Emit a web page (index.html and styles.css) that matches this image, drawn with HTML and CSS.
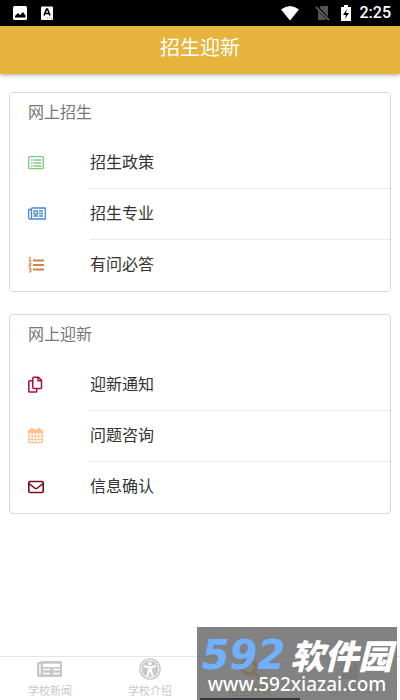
FILE: index.html
```
<!DOCTYPE html>
<html lang="zh-CN">
<head>
<meta charset="utf-8">
<meta name="viewport" content="width=device-width, initial-scale=1">
<title>招生迎新</title>
<link rel="stylesheet" href="styles.css">
</head>
<body>
<div class="status">
  <svg class="status-icon" viewBox="0 0 16 16"><rect x="1" y="1" width="14" height="14" rx="1.500" fill="#fff"/><path d="M3 12.500V11l3-3 2 2 3-3 2.500 3.500v2z" fill="#000"/></svg>
  <svg class="status-icon status-a" viewBox="0 0 16 16"><rect x="2" y="1.500" width="12" height="13.500" rx="1" fill="#fff"/><path d="M5 10.500 7.500 4h1L11 10.500M6 8.500h4" fill="none" stroke="#000" stroke-width="1.600"/><path d="M8 13h5" stroke="#888" stroke-dasharray="1 1"/></svg>
  <svg class="wifi" viewBox="0 0 20 16"><path d="M1 4.500Q10-2.500 19 4.500L10 15.500z" fill="#fff"/></svg>
  <svg class="status-icon" viewBox="0 0 16 16"><path d="M6 1h7v14H3V4z" fill="#555"/><path d="M1 1l13 14" stroke="#000" stroke-width="3"/><path d="M1 2l13 13" stroke="#777" stroke-width="1.200"/></svg>
  <svg class="battery" viewBox="0 0 12 18"><path d="M4 1h4v2h3v14H1V3h3z" fill="#fff"/><path d="M7 5l-4 6h3l-1 4 4-6H6z" fill="#000"/></svg>
  <span class="time">2:25</span>
</div>
<header class="header"><h1>招生迎新</h1></header>
<main class="main">
  <section class="card">
    <h2>网上招生</h2>
    <a class="row" href="#policy">
      <svg class="icon green" viewBox="0 0 18 18"><rect x=".7" y="2.700" width="14.600" height="12" rx="1"/><path d="M3 6h1.500M3 9h1.500M3 12h1.500M5.500 6h8M5.500 9h8M5.500 12h8"/></svg>
      <span>招生政策</span></a>
    <a class="row" href="#major">
      <svg class="icon blue" viewBox="0 0 18 18"><path d="M3.500 3h13.800v11H2Q.7 14 .7 12.500V4.500h2.800M3.500 3v9.500Q3.500 14 2 14"/><path d="M6 6h3.500v3H6zM11 6h4M11 8.500h4M5.500 11h4.500M11 11h4"/></svg>
      <span>招生专业</span></a>
    <a class="row" href="#faq">
      <svg class="icon orange" viewBox="0 0 18 18"><path d="M5 4.500h11M5 9h11M5 13.500h11" stroke-width="2"/><path d="M.8 2 2 1.500v3.300M.6 5h2.800M.8 7.200Q3 6.200 3 7.800L.8 10h2.600M.6 12h2.400L1.800 13.500q2 .3 1 2-.8 .8-2 .2" stroke-width="1.100"/></svg>
      <span>有问必答</span></a>
  </section>
  <section class="card">
    <h2>网上迎新</h2>
    <a class="row" href="#notice">
      <svg class="icon crimson" viewBox="0 0 18 18"><path d="M4.800 2.200q0-.9 .9-.9h4.800l3 3v7.200q0 .9-.9 .9H5.700q-.9 0-.9-.9zM10 1.500v3.300h3.300M4.800 4.800H1.700q-.9 0-.9 .9v9.500q0 .9 .9 .9h6.100q.9 0 .9-.9v-2.600" stroke-width="1.500"/></svg>
      <span>迎新通知</span></a>
    <a class="row" href="#consult">
      <svg class="icon peach" viewBox="0 0 18 18"><rect x=".7" y="3" width="13.600" height="12.700" rx="1"/><path d="M1 4.800h13" stroke-width="3"/><path d="M4 1v4M11 1v4" stroke-width="2.500"/><path d="M4.200 6v9M7.500 6v9M10.800 6v9M1 9.300h13M1 12.500h13" stroke-width=".9"/></svg>
      <span>问题咨询</span></a>
    <a class="row" href="#confirm">
      <svg class="icon maroon" viewBox="0 0 18 18"><rect x=".8" y="3.500" width="14.400" height="11" rx="1.200" stroke-width="1.600"/><path d="M1 5.500 6.500 10q1.500 1.200 3 0L15 5.500" stroke-width="1.600"/></svg>
      <span>信息确认</span></a>
  </section>
</main>
<footer class="footer">
  <nav class="tabs">
    <a class="tab" href="#news"><svg viewBox="0 0 28 24"><path d="M5 4h20q1 0 1 1v14q0 1-1 1H3q-2 0-2-2V6q0-1 1-1h2.500z" fill="currentColor"/><path d="M4 7v10.500M7 7.500h17M7 12.500h7M17 12.500h7M7 16.500h7M17 16.500h7" fill="none" stroke="#fff" stroke-width="1.300"/><path d="M7 7h17v3H7z" fill="#fff"/></svg><span>学校新闻</span></a>
    <a class="tab" href="#about"><svg viewBox="0 0 28 24"><circle cx="14" cy="12" r="10.800" fill="currentColor"/><circle cx="14" cy="12" r="8.900" fill="none" stroke="#fff"/><circle cx="14" cy="6.500" r="1.800" fill="#fff"/><path d="M8.500 9.200 14 10.500l5.500-1.300M14 10v4M12.800 10.500v3.500L11.500 18.500M15.200 10.500v3.500l1.300 4.500" fill="none" stroke="#fff" stroke-width="2" stroke-linecap="round"/></svg><span>学校介绍</span></a>
    <a class="tab active" href="#enroll"><svg viewBox="0 0 28 24"><circle cx="12.500" cy="10" r="7" fill="none" stroke="currentColor" stroke-width="3.500"/><path d="M18 15.500l6 6" stroke="currentColor" stroke-width="4" stroke-linecap="round"/></svg><span>招生迎新</span></a>
    <a class="tab" href="#mine"><svg viewBox="0 0 28 24"><path d="M9 10V7q0-5 5-5t5 5v3" fill="none" stroke="currentColor" stroke-width="3"/><rect x="6" y="10" width="16" height="12" rx="1" fill="currentColor"/></svg><span>我的空间</span></a>
  </nav>
  <div class="mark">
    <div class="mark-name"><span class="mark-num">592</span><span class="mark-cn">软件园</span></div>
    <div class="mark-url">www.592xiazai.com</div>
    <div class="mark-line"></div>
  </div>
</footer>
</body>
</html>
```
FILE: styles.css
```
* { box-sizing: border-box; }
body {
  margin: 0;
  min-height: 100vh;
  display: flex;
  flex-direction: column;
  background: #fff;
  color: #333;
  font-family: "Noto Sans CJK SC", sans-serif;
}
a { color: inherit; text-decoration: none; }
h1, h2 { margin: 0; font-weight: 400; }

.status {
  display: flex;
  align-items: center;
  height: 26px;
  padding: 0 9px 0 12px;
  background: #000;
}
.status-icon { width: 16px; height: 16px; }
.status-a { margin-left: 11px; }
.wifi { width: 20px; height: 16px; margin: 0 15px 0 auto; }
.battery { width: 12px; height: 18px; margin: 0 8px 0 9px; }
.time {
  color: #fff;
  font: 500 16px/26px Roboto, sans-serif;
}

.header {
  background: #e6b33c;
  color: #fff;
  text-align: center;
  box-shadow: 0 1px 4px rgba(0, 0, 0, .35);
}
.header h1 { font-size: 20px; line-height: 42px; padding-bottom: 6px; }

.main {
  flex: 1;
  display: flex;
  flex-direction: column;
  gap: 22px;
  padding: 18px 9px;
}
.card {
  border: 1px solid #d9d9d9;
  border-radius: 4px;
}
.card h2 {
  padding: 0 18px 8px;
  color: #777;
  font-size: 16px;
  line-height: 37px;
}
.row {
  display: grid;
  grid-template-columns: 62px 1fr;
  align-items: center;
  padding-left: 18px;
  font-size: 16px;
}
.row span {
  height: 51px;
  line-height: 46px;
  border-bottom: 1px solid #ebebeb;
}
.row:last-child span { border-bottom: 0; }
.icon {
  width: 18px;
  height: 18px;
  margin-bottom: 2px;
  fill: none;
  stroke: currentColor;
  stroke-width: 1.3;
  stroke-linejoin: round;
}
.green { color: #82c885; }
.blue { color: #4a89cf; }
.orange { color: #cc8447; }
.crimson { color: #ad0c43; }
.peach { color: #fdc38e; }
.maroon { color: #780d15; }

.footer { position: relative; }
.tabs {
  display: flex;
  border-top: 1px solid #e5e5e5;
}
.tab {
  flex: 1;
  display: flex;
  flex-direction: column;
  align-items: center;
  height: 43px;
  color: #c8c8c8;
  font-size: 11px;
  line-height: 18px;
}
.tab svg { width: 28px; height: 24px; }
.active { color: #e6b33c; }

.mark {
  position: absolute;
  right: 3px;
  bottom: 0;
  width: 200px;
  height: 73px;
  padding-top: 10px;
  background: rgba(105, 105, 105, .83);
  color: #fff;
  white-space: nowrap;
}
.mark-name {
  display: flex;
  align-items: center;
  justify-content: center;
  gap: 5px;
  height: 36px;
}
.mark-num {
  color: #6fb0ff;
  font: italic 700 40px/36px "DejaVu Sans", sans-serif;
}
.mark-cn { font-size: 34px; line-height: 34px; font-weight: 900; font-style: italic; }
.mark-url {
  text-align: center;
  font: 500 19px/22px "Noto Sans", sans-serif;
}
.mark-line {
  position: absolute;
  left: 3px;
  bottom: 0;
  width: 100px;
  height: 2px;
  background: #333339;
}
```
